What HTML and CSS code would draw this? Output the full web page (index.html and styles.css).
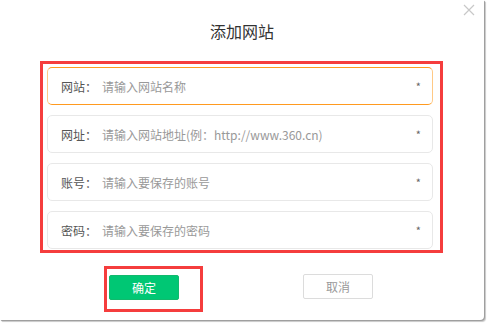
FILE: index.html
```html
<!DOCTYPE html>
<html lang="zh">
<head>
<meta charset="utf-8">
<link rel="stylesheet" href="styles.css">
</head>
<body>
<div class="dialog">
  <span class="close">
    <svg width="12" height="12" viewBox="0 0 12 12"><path d="M1 1L11 11M11 1L1 11" stroke="#c8c8c8" stroke-width="1.2" fill="none"/></svg>
  </span>
  <h1 class="title">添加网站</h1>
  <div class="frame">
    <div class="field field-active"><span class="label">网站：</span><span class="ph">请输入网站名称</span><span class="req">*</span></div>
    <div class="field"><span class="label">网址：</span><span class="ph">请输入网站地址(例：http://www.360.cn)</span><span class="req">*</span></div>
    <div class="field"><span class="label">账号：</span><span class="ph">请输入要保存的账号</span><span class="req">*</span></div>
    <div class="field"><span class="label">密码：</span><span class="ph">请输入要保存的密码</span><span class="req">*</span></div>
  </div>
  <div class="actions">
    <div class="btn-frame"><button class="btn btn-ok">确定</button></div>
    <button class="btn btn-cancel">取消</button>
  </div>
</div>
</body>
</html>
```

FILE: styles.css
```css
html, body {
  margin: 0;
  padding: 0;
  background: #fff;
}
body {
  font-family: "Microsoft YaHei", "Noto Sans CJK SC", "Liberation Sans", sans-serif;
  width: 487px;
  height: 323px;
  overflow: hidden;
}
.dialog {
  position: relative;
  width: 484px;
  height: 320px;
  background: #fff;
  border-radius: 0 0 4px 0;
  box-shadow: 1px 1px 1px #9a9a9a, 2px 2px 1px #cfcfcf;
  box-sizing: border-box;
  padding-top: 20px;
}
.close {
  position: absolute;
  right: 9px;
  top: 4px;
  width: 12px;
  height: 12px;
  display: block;
}
.close svg { display: block; }
.title {
  margin: 0;
  font-weight: normal;
  font-size: 16px;
  line-height: 22px;
  color: #333;
  text-align: center;
}
.frame {
  margin: 19px 0 0 40px;
  width: 403px;
  height: 192px;
  box-sizing: border-box;
  border: 3px solid #f53d3d;
  padding: 3px 0 0 4px;
  display: flex;
  flex-direction: column;
  gap: 10px;
}
.field {
  width: 386px;
  height: 38px;
  box-sizing: border-box;
  border: 1px solid #e8e8e8;
  border-radius: 5px;
  display: flex;
  align-items: center;
  padding: 0 11px 0 13px;
  font-size: 12px;
}
.field-active {
  border-color: #ffc985;
  border-top-color: #ff9a1f;
  border-bottom-color: #ff9a1f;
}
.label {
  color: #555;
  width: 41px;
  flex: none;
}
.ph {
  color: #999;
  flex: 1;
}
.req {
  color: #666;
  font-size: 11px;
  padding-right: 0;
}
.actions {
  display: flex;
  align-items: flex-start;
  margin: 13px 0 0 104px;
}
.btn-frame {
  width: 99px;
  height: 46px;
  box-sizing: border-box;
  border: 3px solid #f53d3d;
  padding: 5px 0 0 2px;
}
.btn {
  width: 70px;
  height: 25px;
  font-family: inherit;
  font-size: 12px;
  border-radius: 2px;
  padding: 0;
  cursor: pointer;
}
.btn-ok {
  background: #00c774;
  border: 1px solid #12b96d;
  color: #fff;
}
.btn-cancel {
  margin: 8px 0 0 100px;
  background: #fff;
  border: 1px solid #dcdcdc;
  color: #999;
}
```
